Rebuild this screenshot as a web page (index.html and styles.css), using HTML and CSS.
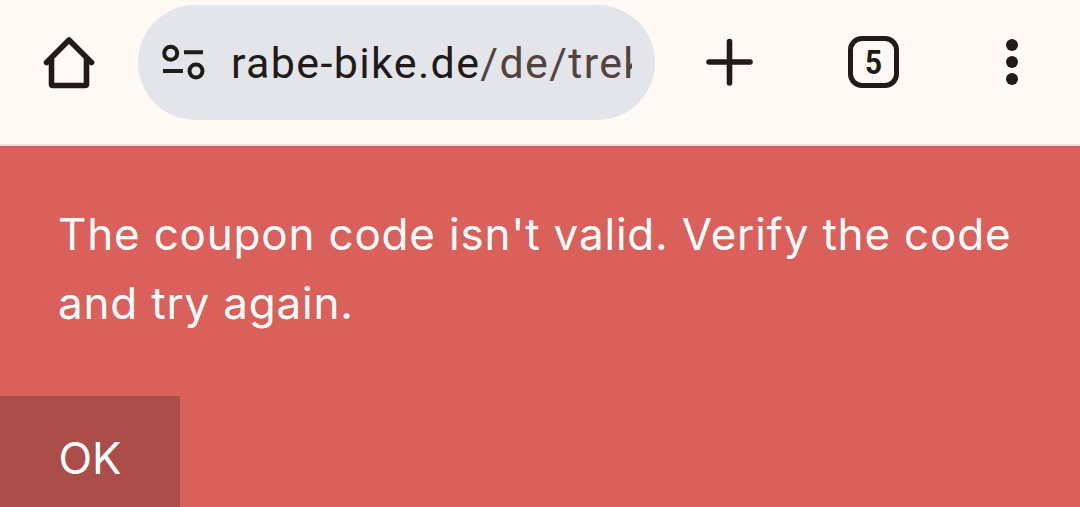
FILE: index.html
```html
<!DOCTYPE html>
<html lang="en">
<head>
<meta charset="utf-8">
<title>Coupon error</title>
<link rel="stylesheet" href="styles.css">
</head>
<body>
<header class="toolbar">
  <div class="slot slot-home">
    <svg class="icon" width="60" height="60" viewBox="39 32 60 60"><path d="M46.500 62.500 69 40l22.500 22.500M51.500 58v26q0 1.500 1.500 1.500h32q1.500 0 1.500-1.500V58" fill="none" stroke="#201a18" stroke-width="5.600" stroke-linecap="round" stroke-linejoin="round"/></svg>
  </div>
  <div class="omnibox">
    <svg class="tune" width="44" height="36" viewBox="161 44 44 36"><g fill="none" stroke="#201a18" stroke-width="4"><circle cx="170.700" cy="53.300" r="6.500"/><circle cx="196" cy="71" r="6.500"/><path d="M184 52.300h19M163 71h20"/></g></svg>
    <div class="url"><span class="host">rabe-bike.de</span><span class="path">/de/trekking-bikes</span></div>
  </div>
  <div class="slot slot-plus">
    <svg class="icon" width="50" height="50" viewBox="704 37 50 50"><path d="M709 62h41M729.500 41.500v41.500" fill="none" stroke="#201a18" stroke-width="5.600" stroke-linecap="round"/></svg>
  </div>
  <div class="slot slot-tabs">
    <div class="tabs"><span class="tabs-count">5</span></div>
  </div>
  <div class="slot slot-menu">
    <svg class="icon" width="16" height="50" viewBox="1003.500 37 16 50"><g fill="#201a18"><circle cx="1011.500" cy="45" r="6"/><circle cx="1011.500" cy="62" r="6"/><circle cx="1011.500" cy="79" r="6"/></g></svg>
  </div>
</header>
<main class="notice">
  <p class="message">The coupon code isn't valid. Verify the code and try again.</p>
  <button class="ok" type="button">OK</button>
</main>
</body>
</html>
```
FILE: styles.css
```css
* { box-sizing: border-box; }
html, body { margin: 0; height: 100%; overflow: hidden; }
body { display: flex; flex-direction: column; background: #da605c; }

.toolbar {
  display: flex;
  align-items: center;
  height: 146px;
  padding-bottom: 20px;
  background: #fff9f6;
  border-bottom: 2px solid #f8dedb;
  color: #201a18;
}
.slot { display: flex; align-items: center; justify-content: center; flex: none; }
.slot-home { width: 138px; }
.slot-plus { width: 148px; }
.slot-tabs { width: 140px; }
.slot-menu { width: 137px; }
.icon { display: block; }

.omnibox {
  display: flex;
  align-items: center;
  flex: none;
  width: 517px;
  height: 115px;
  padding-left: 23px;
  border-radius: 57.5px;
  background: #e3e5eb;
}
.tune { display: block; flex: none; }
.url {
  width: 401px;
  margin-left: 26px;
  padding-top: 4px;
  overflow: hidden;
  white-space: nowrap;
  font: 400 43px/1.2 Roboto, "Noto Sans", sans-serif;
  letter-spacing: 1.35px;
}
.host { color: #201a18; }
.path { color: #53433f; }

.tabs {
  display: flex;
  align-items: center;
  justify-content: center;
  width: 51px;
  height: 52px;
  border: 5px solid #201a18;
  border-radius: 14px;
}
.tabs-count {
  display: block;
  font: 700 33px/1 Roboto, sans-serif;
  transform: scaleX(.9);
  color: #201a18;
}

.notice { flex: 1; display: flex; flex-direction: column; justify-content: space-between; min-height: 0; }
.message {
  margin: 0;
  padding: 54px 58px 0;
  font: 400 44px/69px Inter, sans-serif;
  letter-spacing: .8px;
  color: #fff;
}
.ok {
  width: 180px;
  height: 111px;
  padding: 12px 0 0;
  border: 0;
  background: #ab4d49;
  color: #fff;
  font: 400 44px/1 Inter, sans-serif;
}
```
